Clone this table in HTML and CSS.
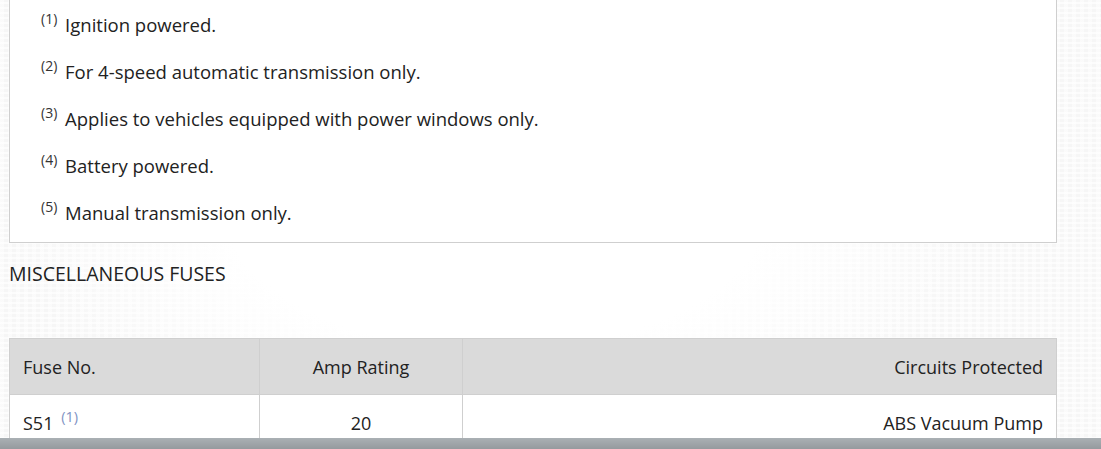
FILE: index.html
```html
<!DOCTYPE html>
<html>
<head>
<meta charset="utf-8">
<link rel="stylesheet" href="styles.css">
</head>
<body>
<div class="page">
  <div class="notes">
    <p><sup>(1)</sup> Ignition powered.</p>
    <p><sup>(2)</sup> For 4-speed automatic transmission only.</p>
    <p><sup>(3)</sup> Applies to vehicles equipped with power windows only.</p>
    <p><sup>(4)</sup> Battery powered.</p>
    <p><sup>(5)</sup> Manual transmission only.</p>
  </div>
  <h3 class="section-title">MISCELLANEOUS FUSES</h3>
  <table class="fuses">
    <thead>
      <tr>
        <th class="c-no">Fuse No.</th>
        <th class="c-amp">Amp Rating</th>
        <th class="c-circ">Circuits Protected</th>
      </tr>
    </thead>
    <tbody>
      <tr>
        <td class="c-no">S51 <sup class="ref">(1)</sup></td>
        <td class="c-amp">20</td>
        <td class="c-circ">ABS Vacuum Pump</td>
      </tr>
    </tbody>
  </table>
</div>
<div class="footer-bar"></div>
</body>
</html>
```

FILE: styles.css
```css
html, body {
  margin: 0;
  padding: 0;
}
body {
  font-family: "Open Sans", "Noto Sans", sans-serif;
  color: #222;
  height: 449px;
  overflow: hidden;
  background-color: #f6f6f6;
  background-image:
    radial-gradient(ellipse 45% 60% at 45% 45%, #ffffff 55%, rgba(255,255,255,0) 100%),
    repeating-linear-gradient(0deg, rgba(255,255,255,0.7) 0 2px, rgba(255,255,255,0) 2px 5px),
    repeating-linear-gradient(90deg, rgba(255,255,255,0.5) 0 4px, rgba(255,255,255,0) 4px 8px);
}
.page {
  padding-left: 9px;
  width: 1048px;
}
.notes {
  background: #fff;
  border: 1px solid #cfcfcf;
  border-top: none;
  padding: 11px 0 15px 31px;
}
.notes p {
  margin: 0 0 19px;
  font-size: 18.5px;
  line-height: 28px;
}
.notes p:last-child {
  margin-bottom: 0;
}
sup {
  font-size: 14px;
  vertical-align: top;
  line-height: 14px;
  position: relative;
  top: 1px;
  color: #333;
  margin-right: 3px;
}
.section-title {
  margin: 0;
  padding-top: 18px;
  height: 95px;
  box-sizing: border-box;
  font-weight: normal;
  font-size: 19.5px;
  line-height: 26px;
}
.fuses {
  width: 1048px;
  border-collapse: collapse;
  font-size: 18px;
  background: #fff;
}
.fuses th, .fuses td {
  border: 1px solid #cfcfcf;
  height: 56px;
  padding: 0 13px;
  font-weight: normal;
  box-sizing: border-box;
}
.fuses th {
  background: #dadada;
}
.c-no { width: 250px; text-align: left; }
.c-amp { width: 203px; text-align: center; }
.c-circ { text-align: right; }
.fuses sup.ref {
  font-size: 14.5px;
  margin-left: 3px;
  margin-right: 0;
  top: -1px;
  color: #7f93c4;
}
.footer-bar {
  position: fixed;
  left: 0;
  right: 0;
  bottom: 0;
  height: 11px;
  background: linear-gradient(#aab0b4, #959a9e);
}
```
